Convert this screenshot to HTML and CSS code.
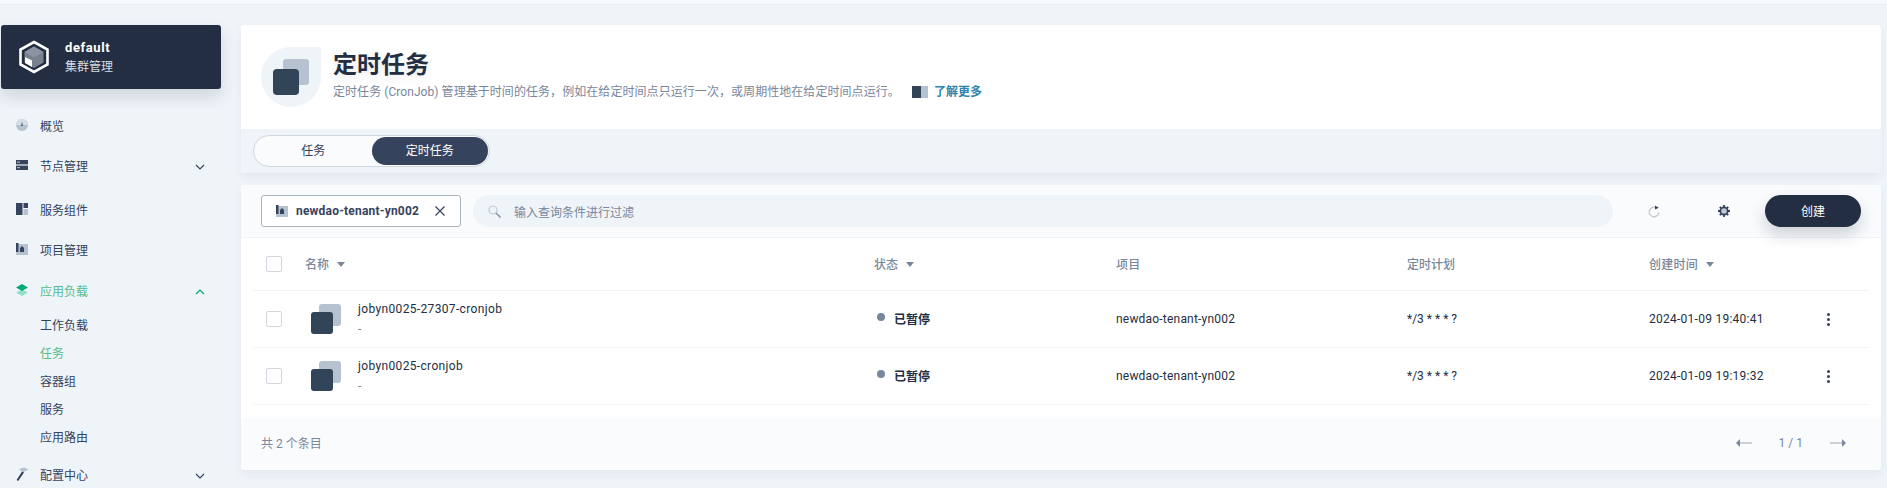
FILE: index.html
```html
<!DOCTYPE html>
<html lang="zh-CN">
<head>
    <meta charset="utf-8" />
    <title>定时任务</title>
    <link rel="stylesheet" href="styles.css">
</head>
<body>
    <div class="topbar"></div>
    <div class="layout">
        <div class="sidebar">
            <div class="cluster">
                <svg class="cluster-icon" width="32" height="34" viewBox="0 0 32 34">
                    <path d="M16 2 L29.5 9.5 V24.5 L16 32 L2.5 24.5 V9.5 Z" fill="#242e42" stroke="#fff" stroke-width="2.6"/>
                    <path d="M16 6.5 L25.5 12 V22.5 L16 28 L6.5 22.5 V12 Z" fill="#79808e"/>
                    <path d="M16 6.5 L25.5 12 L16 17.5 L6.5 12 Z" fill="#8d94a1"/>
                    <path d="M7 17 L14 20.5 V27 L7 23 Z" fill="#fff"/>
                </svg>
                <div>
                    <div class="cluster-name">default</div>
                    <div class="cluster-type">集群管理</div>
                </div>
            </div>
            <ul class="menu">
                <li class="item">
                    <svg width="12" height="12" viewBox="0 0 12 12"><circle cx="6" cy="6" r="6" fill="#b6c2cf"/><path d="M0 6a6 6 0 0 1 12 0z" fill="#d5dde5"/><path d="M5.2 7 L6 2.5 L6.8 7 Z" fill="#36435c"/></svg>
                    <span>概览</span>
                </li>
                <li class="item item-gap">
                    <svg width="12" height="12" viewBox="0 0 12 12"><rect y="1" width="12" height="4.4" fill="#36435c"/><rect y="6.6" width="12" height="4.4" fill="#36435c"/><rect x="1" y="2.6" width="3" height="1" fill="#b6c2cf"/><rect x="1" y="8.2" width="3" height="1" fill="#b6c2cf"/></svg>
                    <span>节点管理</span>
                    <svg class="chevron" width="10" height="6" viewBox="0 0 10 6"><path d="M1 1 L5 5 L9 1" fill="none" stroke="#36435c" stroke-width="1.2"/></svg>
                </li>
                <li class="item">
                    <svg width="12" height="12" viewBox="0 0 12 12"><rect width="6.5" height="12" fill="#36435c"/><rect x="7.5" width="4.5" height="5" fill="#36435c"/><rect x="7.5" y="6" width="4.5" height="6" fill="#b6c2cf"/></svg>
                    <span>服务组件</span>
                </li>
                <li class="item">
                    <svg width="12" height="12" viewBox="0 0 12 12"><rect y="1" width="12" height="11" fill="#b6c2cf"/><rect width="2.5" height="9" fill="#36435c"/><path d="M4 9 V5 L6 3 L8 5 V9 Z" fill="#36435c"/></svg>
                    <span>项目管理</span>
                </li>
                <li class="item item-open">
                    <svg width="12" height="12" viewBox="0 0 12 12"><path d="M6 5.5 L12 8.5 L6 12 L0 8.5 Z" fill="#90e0c5"/><path d="M6 0 L12 3.5 L6 7 L0 3.5 Z" fill="#00aa72"/></svg>
                    <span>应用负载</span>
                    <svg class="chevron" width="10" height="6" viewBox="0 0 10 6"><path d="M1 5 L5 1 L9 5" fill="none" stroke="#00aa72" stroke-width="1.2"/></svg>
                </li>
                <li class="sub">
                    <div>工作负载</div>
                    <div class="sub-active">任务</div>
                    <div>容器组</div>
                    <div>服务</div>
                    <div>应用路由</div>
                </li>
                <li class="item">
                    <svg width="12" height="14" viewBox="0 0 12 14"><path d="M3 2.5 C6 0 9 0 12 2.5 L11 4 L9 3.5 L8 5.5 L6 4.5 Z" fill="#b6c2cf"/><path d="M6 4.5 L8 5.5 L2.2 14 L0.6 13 Z" fill="#36435c"/></svg>
                    <span>配置中心</span>
                    <svg class="chevron" width="10" height="6" viewBox="0 0 10 6"><path d="M1 1 L5 5 L9 1" fill="none" stroke="#36435c" stroke-width="1.2"/></svg>
                </li>
            </ul>
        </div>

        <div class="main">
            <div class="card banner">
                <div class="banner-head">
                    <div class="banner-icon">
                        <svg width="36" height="36" viewBox="0 0 36 36"><rect x="10" y="0" width="26" height="26" rx="3" fill="#b6c2cf"/><rect x="0" y="10" width="26" height="26" rx="4" fill="#324558"/></svg>
                    </div>
                    <div>
                        <h1 class="title">定时任务</h1>
                        <p class="desc">定时任务 (CronJob) 管理基于时间的任务，例如在给定时间点只运行一次，或周期性地在给定时间点运行。
                            <a class="learn"><svg width="16" height="12" viewBox="0 0 16 12"><rect width="9" height="12" fill="#324558"/><rect x="9" width="7" height="12" fill="#b6c2cf"/></svg>了解更多</a>
                        </p>
                    </div>
                </div>
                <div class="tabs-row">
                    <div class="tabs">
                        <div class="tab">任务</div>
                        <div class="tab tab-active">定时任务</div>
                    </div>
                </div>
            </div>

            <div class="card list">
                <div class="toolbar">
                    <div class="tag">
                        <svg width="12" height="12" viewBox="0 0 12 12"><rect y="1" width="12" height="11" fill="#b6c2cf"/><rect width="2.5" height="9" fill="#36435c"/><path d="M4 9 V5 L6 3 L8 5 V9 Z" fill="#36435c"/></svg>
                        <span class="tag-text">newdao-tenant-yn002</span>
                        <svg class="tag-close" width="10" height="10" viewBox="0 0 10 10"><path d="M0.5 0.5 L9.5 9.5 M9.5 0.5 L0.5 9.5" stroke="#36435c" stroke-width="1.2"/></svg>
                    </div>
                    <div class="search">
                        <svg width="13" height="13" viewBox="0 0 13 13"><circle cx="5" cy="5" r="4" fill="#eff4f9" stroke="#c1c9d1" stroke-width="1.2"/><path d="M8 8 L12.5 12.5" stroke="#8d99a8" stroke-width="1.6"/></svg>
                        <span>输入查询条件进行过滤</span>
                    </div>
                    <div class="tool tool-first">
                        <svg width="12" height="13" viewBox="0 0 12 13"><path d="M8.5 2.8 A4.8 4.8 0 1 0 10.8 7.5" fill="none" stroke="#c1c9d1" stroke-width="1.3"/><path d="M7 0.5 L10.8 2.8 L7 4.5 Z" fill="#36435c"/></svg>
                    </div>
                    <div class="tool">
                        <svg width="12" height="12" viewBox="0 0 12 12"><circle cx="6" cy="6" r="3.7" fill="#c1c9d1" stroke="#36435c" stroke-width="1.8"/><path d="M6 0 V2 M6 10 V12 M0 6 H2 M10 6 H12 M1.8 1.8 L3.2 3.2 M8.8 8.8 L10.2 10.2 M1.8 10.2 L3.2 8.8 M8.8 3.2 L10.2 1.8" stroke="#36435c" stroke-width="1.8"/></svg>
                    </div>
                    <button class="create">创建</button>
                </div>

                <div class="table">
                    <div class="row head">
                        <div class="c-check"><i class="box"></i></div>
                        <div class="c-name">名称<i class="caret"></i></div>
                        <div class="c-status">状态<i class="caret"></i></div>
                        <div class="c-project">项目</div>
                        <div class="c-plan">定时计划</div>
                        <div class="c-time">创建时间<i class="caret"></i></div>
                    </div>
                    <div class="row">
                        <div class="c-check"><i class="box"></i></div>
                        <div class="c-name">
                            <svg class="job-icon" width="30" height="30" viewBox="0 0 30 30"><rect x="8" y="0" width="22" height="22" rx="3" fill="#b6c2cf"/><rect x="0" y="8" width="22" height="22" rx="3" fill="#324558"/></svg>
                            <div>
                                <div class="job-name">jobyn0025-27307-cronjob</div>
                                <div class="job-sub">-</div>
                            </div>
                        </div>
                        <div class="c-status"><i class="dot"></i><b>已暂停</b></div>
                        <div class="c-project">newdao-tenant-yn002</div>
                        <div class="c-plan">*/3 * * * ?</div>
                        <div class="c-time">2024-01-09 19:40:41</div>
                        <div class="c-more"><i></i><i></i><i></i></div>
                    </div>
                    <div class="row">
                        <div class="c-check"><i class="box"></i></div>
                        <div class="c-name">
                            <svg class="job-icon" width="30" height="30" viewBox="0 0 30 30"><rect x="8" y="0" width="22" height="22" rx="3" fill="#b6c2cf"/><rect x="0" y="8" width="22" height="22" rx="3" fill="#324558"/></svg>
                            <div>
                                <div class="job-name">jobyn0025-cronjob</div>
                                <div class="job-sub">-</div>
                            </div>
                        </div>
                        <div class="c-status"><i class="dot"></i><b>已暂停</b></div>
                        <div class="c-project">newdao-tenant-yn002</div>
                        <div class="c-plan">*/3 * * * ?</div>
                        <div class="c-time">2024-01-09 19:19:32</div>
                        <div class="c-more"><i></i><i></i><i></i></div>
                    </div>
                </div>

                <div class="foot">
                    <span>共 2 个条目</span>
                    <div class="pager">
                        <svg width="16" height="8" viewBox="0 0 16 8"><path d="M0 4 L4 0 V8 Z" fill="#79879c"/><rect x="4" y="3" width="12" height="2" fill="#c9d1da"/></svg>
                        <span>1 / 1</span>
                        <svg width="16" height="8" viewBox="0 0 16 8"><rect y="3" width="12" height="2" fill="#c9d1da"/><path d="M16 4 L12 0 V8 Z" fill="#79879c"/></svg>
                    </div>
                </div>
            </div>
        </div>
    </div>
</body>
</html>
```

FILE: styles.css
```css
* {
    box-sizing: border-box;
}

html,
body {
    margin: 0;
    height: 488px;
    overflow: hidden;
}

body {
    font-family: Roboto, "Noto Sans CJK SC", sans-serif;
    font-size: 12px;
    color: #242e42;
    background-color: #eff4f9;
}

.topbar {
    height: 5px;
    background-color: #f6f9fb;
    border-bottom: 1px solid #e9eef3;
}

.layout {
    display: flex;
    padding-top: 20px;
}

/* sidebar */
.sidebar {
    width: 241px;
    flex: none;
    padding-left: 1px;
}

.cluster {
    width: 220px;
    height: 64px;
    display: flex;
    align-items: center;
    gap: 15px;
    padding-left: 17px;
    color: #fff;
    background-color: #242e42;
    border-radius: 3px;
    box-shadow: 0 8px 16px 0 rgba(36, 46, 66, 0.15);
}

.cluster-name {
    font-size: 13px;
    font-weight: 700;
    line-height: 20px;
    letter-spacing: 0.6px;
    padding-top: 1px;
}

.cluster-type {
    line-height: 19px;
    color: #d5dee7;
}

.menu {
    list-style: none;
    margin: 16px 0 0;
    padding: 0;
}

.item {
    display: flex;
    align-items: center;
    height: 40px;
    padding-left: 15px;
    gap: 12px;
    color: #36435c;
}

.item svg {
    flex: none;
}

.item .chevron {
    margin-left: auto;
    margin-right: 36px;
    margin-top: 4px;
}

.item-gap {
    margin-bottom: 4px;
}

.item-open {
    margin-top: 1px;
    color: #55bc8a;
}

.sub {
    padding: 2px 0 2px 39px;
    color: #36435c;
}

.sub div {
    height: 28px;
    line-height: 28px;
}

.sub .sub-active {
    color: #55bc8a;
}

/* main */
.main {
    flex: 1;
    padding-right: 6px;
}

.card {
    border-radius: 3px;
    box-shadow: 0 4px 8px 0 rgba(36, 46, 66, 0.06);
}

.banner {
    background-color: #fff;
}

.banner-head {
    height: 104px;
    display: flex;
    padding: 22px 0 0 20px;
}

.banner-icon {
    width: 60px;
    height: 60px;
    flex: none;
    margin-right: 12px;
    padding: 12px;
    background-color: #eff4f9;
    border-radius: 50% 0 50% 50%;
}

.title {
    margin: 1px 0 0;
    font-size: 24px;
    line-height: 34px;
    font-weight: 700;
    text-shadow: 0 4px 8px rgba(36, 46, 66, 0.1);
}

.desc {
    margin: 0;
    line-height: 20px;
    letter-spacing: 0.06px;
    color: #79879c;
}

.learn {
    margin-left: 9px;
    font-weight: 700;
    color: #2f83ac;
}

.learn svg {
    margin-right: 6px;
    vertical-align: -2px;
}

.tabs-row {
    height: 44px;
    padding: 6px 0 0 12px;
    background-color: #eff4f9;
}

.tabs {
    width: 237px;
    height: 32px;
    display: flex;
    padding: 1px;
    background-color: #f9fbfd;
    border: 1px solid #d1d7df;
    border-radius: 16px;
}

.tab {
    width: 117px;
    line-height: 28px;
    text-align: center;
    color: #36435c;
}

.tab-active {
    color: #fff;
    background-color: #36435c;
    border-radius: 14px;
}

.list {
    margin-top: 12px;
    background-color: #fff;
}

.toolbar {
    height: 53px;
    display: flex;
    align-items: center;
    padding: 0 20px;
    background-color: #f9fbfd;
    border-bottom: 1px solid #eff4f9;
    border-radius: 3px 3px 0 0;
}

.tag {
    width: 200px;
    height: 32px;
    flex: none;
    display: flex;
    align-items: center;
    padding-left: 14px;
    background-color: #fff;
    border: 1px solid #abb4c1;
    border-radius: 3px;
}

.tag-text {
    margin-left: 8px;
    font-weight: 700;
    letter-spacing: 0.2px;
    color: #36435c;
}

.tag-close {
    margin-left: auto;
    margin-right: 15px;
}

.search {
    flex: 1;
    height: 32px;
    display: flex;
    align-items: center;
    gap: 13px;
    margin-left: 12px;
    padding-left: 15px;
    color: #79879c;
    background-color: #eff4f9;
    border-radius: 16px;
}

.tool {
    width: 70px;
    display: flex;
    justify-content: center;
    flex: none;
}

.tool-first {
    margin-left: 6px;
}

.create {
    width: 96px;
    height: 32px;
    flex: none;
    margin-left: 6px;
    padding: 0 0 2px;
    border: 0;
    font: inherit;
    color: #fff;
    background-color: #242e42;
    border-radius: 16px;
    box-shadow: 0 8px 16px 0 rgba(36, 46, 66, 0.2);
}

.table {
    padding: 0 12px 13px;
}

.row {
    height: 57px;
    display: flex;
    align-items: center;
    border-bottom: 1px solid #eff4f9;
}

.head {
    height: 53px;
    font-weight: 500;
    color: #79879c;
}

.head .c-name,
.head .c-status,
.head .c-project,
.head .c-plan,
.head .c-time {
    padding-bottom: 2px;
}

.c-check {
    width: 52px;
    padding-left: 13px;
    flex: none;
    display: flex;
}

.box {
    width: 16px;
    height: 16px;
    background-color: #fff;
    border: 1px solid #d1d7df;
    border-radius: 2px;
}

.c-name {
    width: 569px;
    flex: none;
    display: flex;
    align-items: center;
}

.job-icon {
    margin: 0 17px 0 6px;
    flex: none;
}

.job-name {
    line-height: 18px;
    margin-bottom: 2px;
    letter-spacing: 0.35px;
}

.job-sub {
    line-height: 18px;
    color: #79879c;
}

.caret {
    margin: 3px 0 0 8px;
    border-style: solid;
    border-width: 5px 4.5px 0;
    border-color: #79879c transparent transparent;
}

.c-status {
    width: 242px;
    flex: none;
    display: flex;
    align-items: center;
}

.c-status .dot {
    margin: -4px 9px 0 3px;
}

.c-status b {
    margin-top: -2px;
    font-weight: 700;
    color: #242e42;
}

.dot {
    width: 8px;
    height: 8px;
    background-color: #79879c;
    border-radius: 50%;
}

.c-project {
    width: 291px;
    flex: none;
    letter-spacing: 0.2px;
}

.c-plan {
    width: 242px;
    flex: none;
}

.c-time {
    width: 178px;
    flex: none;
    display: flex;
    align-items: center;
    letter-spacing: 0.26px;
}

.c-more {
    display: flex;
    flex-direction: column;
    gap: 2px;
}

.c-more i {
    width: 3px;
    height: 3px;
    background-color: #36435c;
    border-radius: 50%;
}

.foot {
    height: 52px;
    display: flex;
    align-items: center;
    justify-content: space-between;
    padding: 0 35px 3px 20px;
    color: #79879c;
    background-color: #f9fbfd;
    border-radius: 0 0 3px 3px;
}

.pager {
    display: flex;
    align-items: center;
    gap: 27px;
}
```
